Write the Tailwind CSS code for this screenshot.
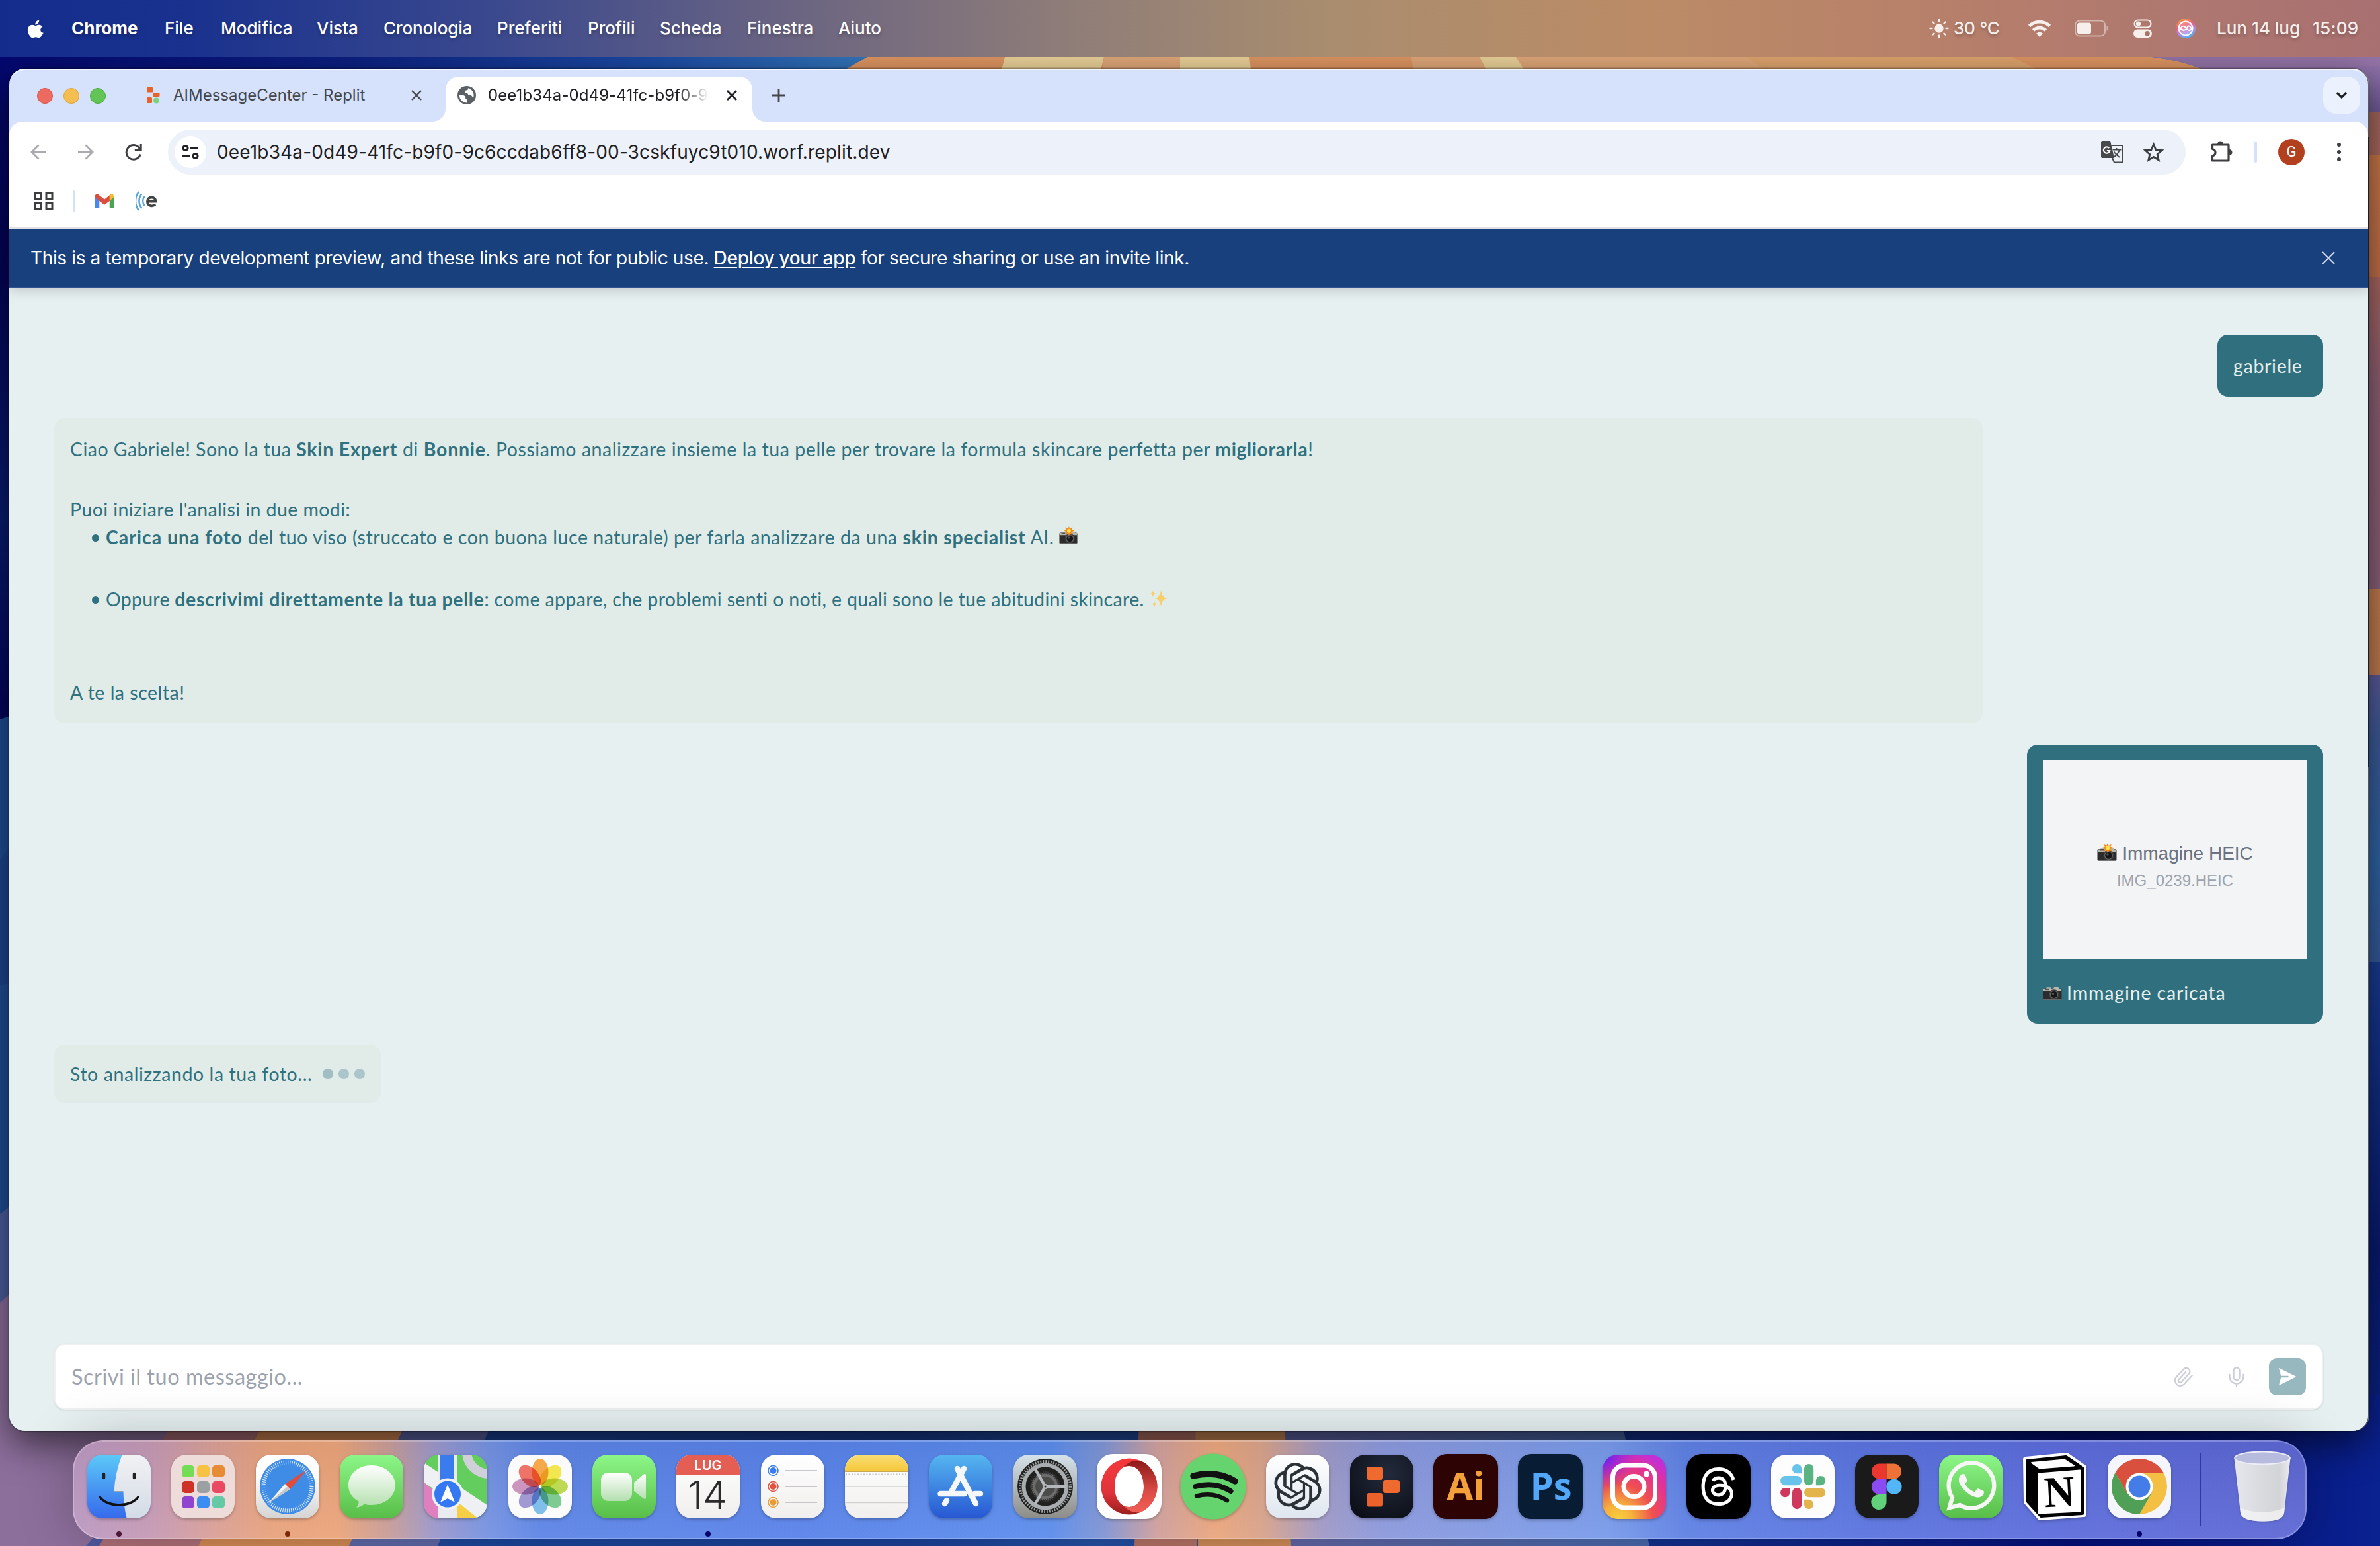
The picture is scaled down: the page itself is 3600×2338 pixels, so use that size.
<!DOCTYPE html>
<html lang="it">
<head>
<meta charset="utf-8">
<title>Skin Expert</title>
<script src="https://cdn.jsdelivr.net/npm/@tailwindcss/browser@4"></script>
</head>
<body class="bg-[#04086f]">
<!-- shared symbols and gradients -->
<svg class="absolute w-0 h-0" aria-hidden="true">
  <defs>
    <linearGradient id="green" x1="0" y1="0" x2="0" y2="1"><stop offset="0" stop-color="#8cf688"/><stop offset="1" stop-color="#58be48"/></linearGradient>
    <linearGradient id="white" x1="0" y1="0" x2="0" y2="1"><stop offset="0" stop-color="#ffffff"/><stop offset="1" stop-color="#f0efed"/></linearGradient>
    <linearGradient id="blue" x1="0" y1="0" x2="0" y2="1"><stop offset="0" stop-color="#55b6f0"/><stop offset="1" stop-color="#2757d3"/></linearGradient>
    <linearGradient id="glass" x1="0" y1="0" x2="0" y2="1"><stop offset="0" stop-color="#ffffff"/><stop offset="1" stop-color="#b4dfae"/></linearGradient>
    <symbol id="camera" viewBox="0 0 30 30">
      <rect x="0.5" y="8" width="29" height="18" rx="2" fill="#2c2c2c"/>
      <path d="M1 12V8.500h4l1-2h6l1 2h3l2-2.500h6l2 2.500h3V12z" fill="#b9b6ae"/>
      <rect x="4" y="8" width="6" height="2.500" fill="#555"/>
      <circle cx="17.500" cy="17.500" r="8" fill="#3b3b3b"/><circle cx="17.500" cy="17.500" r="6.500" fill="#666"/><circle cx="17.500" cy="17.500" r="5.200" fill="#161616"/><circle cx="16" cy="16" r="1.800" fill="#4d5660"/>
      <rect x="1" y="25" width="28" height="1" fill="#777"/>
    </symbol>
    <symbol id="flash" viewBox="0 0 30 30">
      <path d="M16 1l1.600 4 4.200-2.200-1.400 4 4 1.300-3.800 1.800 2 3.800-4-1.300L16 16l-2.100-3.800-4.200 1.200 2-3.600-3.800-1.700 4-1.400L10.200 2.800l4.200 2z" fill="#f08a1c"/><circle cx="16" cy="8.300" r="3.200" fill="#ffe14d"/>
    </symbol>
  </defs>
</svg>

<div class="relative w-[3600px] h-[2338px] overflow-hidden flex flex-col font-[Inter,'Liberation_Sans',sans-serif]">

  <!-- wallpaper -->
  <svg class="absolute inset-0" width="3600" height="2338" viewBox="0 0 3600 2338">
    <defs>
      <linearGradient id="wt" x1="0" x2="1300" gradientUnits="userSpaceOnUse"><stop offset="0" stop-color="#04086f"/><stop offset=".4" stop-color="#0b1f80"/><stop offset=".75" stop-color="#1b49a2"/><stop offset="1" stop-color="#3273b8"/></linearGradient>
      <linearGradient id="wl" x1="0" y1="86" x2="0" y2="1085" gradientUnits="userSpaceOnUse"><stop offset="0" stop-color="#04086f"/><stop offset=".3" stop-color="#030358"/><stop offset=".7" stop-color="#091c70"/><stop offset="1" stop-color="#03035c"/></linearGradient>
      <linearGradient id="wr" x1="0" y1="86" x2="0" y2="2338" gradientUnits="userSpaceOnUse"><stop offset="0" stop-color="#9475aa"/><stop offset=".037" stop-color="#6f5a98"/><stop offset=".0371" stop-color="#a3675f"/><stop offset=".066" stop-color="#a8685c"/><stop offset=".0661" stop-color="#c87748"/><stop offset=".148" stop-color="#c06f4a"/><stop offset=".1481" stop-color="#a8665f"/><stop offset=".22" stop-color="#8f6074"/><stop offset=".357" stop-color="#8b6078"/><stop offset=".3571" stop-color="#c27c4e"/><stop offset=".415" stop-color="#c07a50"/><stop offset=".4151" stop-color="#5b5a9a"/><stop offset=".46" stop-color="#3b5a9a"/><stop offset=".54" stop-color="#2e65a5"/><stop offset=".608" stop-color="#35599a"/><stop offset=".6081" stop-color="#183c92"/><stop offset=".8" stop-color="#081a70"/><stop offset="1" stop-color="#0c2a94"/></linearGradient>
      <linearGradient id="wb" x1="0" x2="3600" gradientUnits="userSpaceOnUse"><stop offset="0" stop-color="#5b5fa3"/><stop offset=".2" stop-color="#1b469c"/><stop offset=".38" stop-color="#1a4098"/><stop offset=".46" stop-color="#2450a4"/><stop offset=".7" stop-color="#13308e"/><stop offset=".87" stop-color="#04107a"/><stop offset="1" stop-color="#0a2190"/></linearGradient>
      <linearGradient id="wp" x1="0" x2="1" ><stop offset="0" stop-color="#6266a6"/><stop offset="1" stop-color="#4769ad"/></linearGradient>
    </defs>
    <rect y="0" width="3600" height="300" fill="url(#wt)"/>
    <rect y="110" width="40" height="980" fill="url(#wl)"/>
    <path d="M1312 86H3255Q3300 92 3330 104L3400 130H1236z" fill="#dc9461"/>
    <path d="M1520 86h150l-10 40h-150z M1785 86h105l4 40h-109z M2238 86h55l30 40h-65z" fill="#e8cf97"/>
    <path d="M1670 86h115v40h-120z M2135 86h103l20 40h-118z M2293 86h350l60 40h-385z" fill="#dea678"/>
    <path d="M2643 86h400l80 40h-430z" fill="#dca36c"/>
    <path d="M3255 86Q3300 92 3330 104L3400 140H3600V86z" fill="#9373a6"/>
    <rect x="3560" y="100" width="40" height="2238" fill="url(#wr)"/>
    <rect y="2110" x="0" width="3600" height="228" fill="url(#wb)"/>
    <path d="M0 1088L40 1075V1850H0z" fill="#1f4f97"/><path d="M0 1300L40 1250V1480L0 1490z" fill="#1c4690"/>
    <path d="M0 1836L40 1805V1970H0z" fill="#4d60a0"/>
    <path d="M0 1970L40 1935V2150H300L130 2338H0z" fill="#8d6f9c"/>
    <path d="M150 2338L262 2150H420L305 2338z" fill="#ae6f78"/>
    <path d="M300 2338L400 2150H615L528 2338z" fill="#d48a54"/>
    <path d="M528 2338L615 2150H745L662 2338z" fill="#5f68a8"/>
    <path d="M1723 2150h88v188h-95z" fill="#b57266"/><path d="M1808 2150h136l10 188h-142z" fill="#cf8c58"/>
    <path d="M1943 2150h510l42 188h-542z" fill="url(#wp)"/>
  </svg>

  <!-- menu bar -->
  <header class="relative flex h-[86px] shrink-0 items-center justify-between bg-[linear-gradient(90deg,#142c8c_0%,#1a328e_8%,#3b498e_21%,#6a6482_33%,#8f7d78_45%,#a98d6e_56%,#bb8b66_69%,#b7806a_81%,#ae7770_92%,#a87070_100%)] pl-[40px] text-[26px] leading-[32px] font-medium text-white [text-shadow:0_3px_5px_rgba(0,0,0,.25)]">
    <nav class="flex items-center">
      <svg class="w-[68px] h-[34px] -mt-[5px] drop-shadow" viewBox="0 0 68 34" fill="#fff"><path transform="translate(-.5,-.5) scale(1.200)" d="M21.800 21.800c-.5 1.200-1.100 2.200-1.800 3.200-1 1.400-2.200 3.200-3.900 3.200-1.500 0-1.900-1-4-1-2 0-2.500 1-4 1-1.600 0-2.800-1.600-3.800-3C1.600 21.500 1.300 17 3 14.600c1.100-1.700 3-2.700 4.700-2.700 1.800 0 2.900 1 4.300 1 1.400 0 2.300-1 4.300-1 1.600 0 3.200.9 4.400 2.300-3.900 2.100-3.200 7.600 1.100 7.600zM15.200 9.700c.8-1 1.400-2.400 1.200-3.800-1.300.1-2.800.9-3.700 2-.8.900-1.400 2.300-1.200 3.700 1.400 0 2.900-.8 3.700-1.900z"/></svg>
      <b class="w-[141px]">Chrome</b>
      <span class="w-[85px]">File</span>
      <span class="w-[145px]">Modifica</span>
      <span class="w-[101px]">Vista</span>
      <span class="w-[172px] tracking-[-.1px]">Cronologia</span>
      <span class="w-[137px]">Preferiti</span>
      <span class="w-[109px]">Profili</span>
      <span class="w-[132px]">Scheda</span>
      <span class="w-[138px]">Finestra</span>
      <span>Aiuto</span>
    </nav>
    <div class="flex items-center whitespace-nowrap text-[#f6efec]">
      <svg class="w-[30px] h-[30px] mr-[7px]" viewBox="0 0 30 30" fill="#f6efec" stroke="#f6efec" stroke-width="2.400" stroke-linecap="round"><circle cx="15" cy="15" r="5.500"/><path d="M15 1.500v3M15 25.500v3M1.500 15h3M25.500 15h3M5.500 5.500l2 2M22.500 22.500l2 2M5.500 24.500l2-2M22.500 7.500l2-2"/></svg>
      <span class="w-[112px] tracking-[-.2px]">30 °C</span>
      <svg class="w-[36px] h-[28px] mr-[35px]" viewBox="0 0 36 28" fill="none" stroke="#f6efec" stroke-width="4.600"><path d="M2.500 10.500a22 22 0 0 1 31 0"/><path d="M8.500 17a13.500 13.500 0 0 1 19 0"/><path d="M18 27l-5-5.300a7.200 7.200 0 0 1 10 0z" fill="#f6efec" stroke="none"/></svg>
      <svg class="w-[52px] h-[26px] mr-[37px]" viewBox="0 0 52 26"><rect x="1" y="1.500" width="45" height="23" rx="6.500" fill="none" stroke="#f6efec" stroke-opacity=".5" stroke-width="2"/><rect x="4" y="4.500" width="21" height="17" rx="3.500" fill="#f6efec"/><path d="M48.500 9a4.500 4.500 0 0 1 0 8z" fill="#f6efec" fill-opacity=".5"/></svg>
      <svg class="w-[28px] h-[28px] mr-[36px]" viewBox="0 0 28 28"><rect x="1.500" y="1.500" width="25" height="11" rx="5.500" fill="none" stroke="#f6efec" stroke-width="2.200"/><circle cx="7.500" cy="7" r="3.600" fill="#f6efec"/><rect y="15.500" width="28" height="12.500" rx="6.200" fill="#f6efec"/><circle cx="21" cy="21.700" r="3.800" fill="#a8776a"/></svg>
      <svg class="w-[30px] h-[30px] mr-[32px]" viewBox="0 0 30 30"><defs><linearGradient id="siri" x1=".2" y1="0" x2=".6" y2="1"><stop offset="0" stop-color="#f0a040"/><stop offset=".4" stop-color="#ea5c7c"/><stop offset=".7" stop-color="#b08ae8"/><stop offset="1" stop-color="#48b4f5"/></linearGradient></defs><circle cx="15" cy="15" r="15" fill="url(#siri)"/><circle cx="15" cy="15" r="10.500" fill="#fff" fill-opacity=".2" stroke="#fff" stroke-width="2"/><path d="M6 17c4-7 7-6 10-2s6 4 8 0M6 14c5 6 9 4 11 0s5-3 7 2" fill="none" stroke="#fff" stroke-width="2"/></svg>
      <span class="w-[145px]">Lun 14 lug</span>
      <span class="w-[102px] tracking-[.3px]">15:09</span>
    </div>
  </header>

  <!-- browser window -->
  <main class="relative mt-[18px] ml-[14px] flex h-[2060px] w-[3568px] shrink-0 flex-col rounded-[24px] bg-[#d6e1fb] shadow-[0_20px_56px_rgba(0,0,0,.6),0_0_3px_rgba(0,0,0,.8),2px_0_0_#a4a6a8] [clip-path:inset(-18px_-20px_-200px_-14px)]">
    <i class="absolute -right-[2px] top-[103px] h-[953px] w-[2px] bg-[#16202c]"></i>
    <!-- tab strip -->
    <div class="flex h-[80px] shrink-0 items-end rounded-t-[24px] border-t-2 border-[#f4f7ff] pl-[42px]">
      <div class="mb-[27px] flex gap-[16px]"><i class="size-[24px] rounded-full border border-[#d65548] bg-[#ec6a5f]"></i><i class="size-[24px] rounded-full border border-[#dda23c] bg-[#f4bf50]"></i><i class="size-[24px] rounded-full border border-[#4cab3d] bg-[#61c455]"></i></div>
      <div class="ml-[62px] flex h-[80px] w-[452px] items-center">
        <svg class="w-[20px] h-[26px] mr-[20px]" viewBox="0 0 20 26"><rect x="0" y="1" width="9.500" height="7.500" rx="1.500" fill="#e8632a"/><rect x="9" y="9" width="10.500" height="6" rx="1.500" fill="#e8632a"/><rect y="16" width="8" height="9" rx="1.500" fill="#e8632a"/><circle cx="14.500" cy="21" r="4.500" fill="#7bd37d"/></svg>
        <span class="w-[360px] text-[24px] text-[#44474b]">AIMessageCenter - Replit</span>
        <svg class="w-[16px] h-[16px]" viewBox="0 0 16 16" stroke="#44474b" stroke-width="2.400"><path d="M1 1l14 14M15 1L1 15"/></svg>
      </div>
      <div class="relative flex h-[68px] w-[464px] items-center rounded-t-[20px] bg-white pl-[18px]">
        <svg class="absolute -left-[20px] bottom-0 w-[20px] h-[20px]" viewBox="0 0 20 20"><path d="M20 0v20H0A20 20 0 0 0 20 0z" fill="#fff"/></svg>
        <svg class="absolute -right-[20px] bottom-0 w-[20px] h-[20px]" viewBox="0 0 20 20"><path d="M0 0v20h20A20 20 0 0 1 0 0z" fill="#fff"/></svg>
        <svg class="-mt-[12px] w-[28px] h-[28px] mr-[18px]" viewBox="0 0 28 28"><circle cx="14" cy="14" r="14" fill="#5b6065"/><path d="M3 13c4 0 9 1 9 4s2 2 2 4v4.500A11.500 11.500 0 0 1 3 13zM16 3c1 2-1 3.500-3 3.500S11 10 11 11h4l2 3h3c2 0 2 3 4.500 3A12 12 0 0 0 16 3z" fill="#fff"/></svg>
        <span class="-mt-[12px] mr-[27px] w-[334px] overflow-hidden whitespace-nowrap text-[24px] leading-[32px] tracking-[.1px] text-[#202124] [mask-image:linear-gradient(90deg,#000_86%,transparent)]">0ee1b34a-0d49-41fc-b9f0-9</span>
        <svg class="-mt-[12px] w-[16px] h-[16px]" viewBox="0 0 16 16" stroke="#202124" stroke-width="2.800"><path d="M1 1l14 14M15 1L1 15"/></svg>
      </div>
      <svg class="ml-[29px] mb-[29px] w-[22px] h-[22px]" viewBox="0 0 22 22" stroke="#44474b" stroke-width="2.800"><path d="M11 1v20M1 11h20"/></svg>
      <div class="mb-[12px] ml-auto mr-[12px] flex size-[56px] items-center justify-center rounded-[20px] bg-[#ebf2fd]"><svg class="w-[18px] h-[12px]" viewBox="0 0 18 12" fill="none" stroke="#1d1f22" stroke-width="3.200"><path d="M2 2l7 7 7-7"/></svg></div>
    </div>

    <!-- toolbar -->
    <div class="flex h-[160px] shrink-0 flex-col rounded-t-[20px] bg-white">
      <div class="mt-[12px] flex h-[68px] items-center">
        <svg class="ml-[32px] w-[24px] h-[24px]" viewBox="0 0 24 24" fill="none" stroke="#a9abae" stroke-width="2.800"><path d="M24 12H2M12.500 1.500L2 12l10.500 10.500"/></svg>
        <svg class="ml-[48px] w-[24px] h-[24px]" viewBox="0 0 24 24" fill="none" stroke="#a9abae" stroke-width="2.800"><path d="M0 12h22M11.500 1.500L22 12 11.500 22.500"/></svg>
        <svg class="ml-[47px] w-[26px] h-[26px]" viewBox="0 0 26 26" fill="none" stroke="#3c3e41" stroke-width="3"><path d="M23.300 16.500a10.800 10.800 0 1 1-1.500-9.300L24 10"/><path d="M24.200 1v9.500H14.800"/></svg>
        <div class="ml-[39px] flex h-[68px] w-[3052px] items-center rounded-full bg-[#edf2fa] pl-[10px]">
          <span class="flex size-[48px] items-center justify-center rounded-full bg-white"><svg class="w-[26px] h-[24px]" viewBox="0 0 26 24" fill="none" stroke="#1f2023" stroke-width="3"><circle cx="5.500" cy="6" r="3.600"/><path d="M13 6h12M1 18h12"/><circle cx="20.500" cy="18" r="3.600"/></svg></span>
          <span class="ml-[16px] text-[28px] leading-[36px] tracking-[.15px] text-[#1f2023]">0ee1b34a-0d49-41fc-b9f0-9c6ccdab6ff8-00-3cskfuyc9t010.worf.replit.dev</span>
          <svg class="ml-auto w-[34px] h-[34px] mr-[30px]" viewBox="0 0 34 34"><path d="M2 0h12l6 26H2a2 2 0 0 1-2-2V2a2 2 0 0 1 2-2z" fill="#46484b"/><path d="M15.500 7H31a2 2 0 0 1 2 2v21.500a2 2 0 0 1-2 2H20l-3-6.500" fill="none" stroke="#46484b" stroke-width="2.200"/><path d="M17.500 13.500h13M23.500 11v2.500M28 13.500c-1.500 5-5 8.500-8.500 11M19.500 16.500c2 3 5.500 6 8.500 8.500" fill="none" stroke="#46484b" stroke-width="2"/><path d="M12.200 11a4.700 4.700 0 1 0 1 4H8.800" fill="none" stroke="#fff" stroke-width="2.200"/></svg>
          <svg class="mr-[33px] w-[31px] h-[30px]" viewBox="0 0 31 30" fill="none" stroke="#3c3e41" stroke-width="2.800"><path d="M15.500 3.500l3.500 8.200 9 .8-6.800 5.900 2 8.700-7.700-4.600-7.700 4.600 2-8.700L3 12.500l9-.8z"/></svg>
        </div>
        <svg class="ml-[38px] w-[34px] h-[34px]" viewBox="0 0 34 34" fill="none" stroke="#3c3e41" stroke-width="3.200" stroke-linejoin="round"><path d="M2.500 6H27V30H2.500V23c6-1.500 6-9 0-10.500z"/><path d="M10 5a4.500 4.500 0 0 1 9 0zM28 13a4.500 4.500 0 0 1 0 9z" fill="#3c3e41" stroke="none"/></svg>
        <i class="ml-[32px] h-[32px] w-[4px] rounded-full bg-[#d3e1fb]"></i>
        <span class="ml-[32px] flex size-[40px] items-center justify-center rounded-full bg-[#b23f1e] font-[Roboto,sans-serif] text-[22px] leading-none text-white">G</span>
        <svg class="ml-[49px] w-[6px] h-[28px]" viewBox="0 0 6 28" fill="#3c3e41"><circle cx="3" cy="3" r="3"/><circle cx="3" cy="14" r="3"/><circle cx="3" cy="25" r="3"/></svg>
      </div>
      <div class="flex h-[80px] items-center">
        <svg class="ml-[37px] w-[30px] h-[28px]" viewBox="0 0 30 28" fill="none" stroke="#3c3e41" stroke-width="3"><path d="M1.500 1.500h9v9h-9zM19 1.500h9v9h-9zM1.500 17.500h9v9h-9zM19 17.500h9v9h-9z"/></svg>
        <i class="ml-[29px] h-[32px] w-[4px] rounded-full bg-[#d3e1fb]"></i>
        <svg class="ml-[30px] w-[28px] h-[22px]" viewBox="0 0 29 22"><path d="M0 3v17.500A1.500 1.500 0 0 0 1.500 22H6.500V8z" fill="#4a86f0"/><path d="M29 3v17.500a1.500 1.500 0 0 1-1.500 1.500h-5V8z" fill="#4aa553"/><path d="M0 3C0 0 3-1 5 1l9.500 7.500L24 1c1-1 3-1 4 0l-5.500 10-8 6-8-6L0 5z" fill="#dc4c3f"/><path d="M22.500 2.200C25-.5 29 0 29 3.500V5l-6.500 6z" fill="#f5bc2f"/></svg>
        <svg class="ml-[33px] w-[34px] h-[30px]" viewBox="0 0 34 30" fill="none"><path d="M5 1a22 22 0 0 0 0 28M9.500 4a17 17 0 0 0 0 22M13.500 8a12 12 0 0 0 0 14" stroke="#5aa5dd" stroke-width="2.600"/><path d="M18 15.500h12.500c0-8-12.500-8-12.500 0 0 8 9 8 12 4.500" stroke="#444" stroke-width="3.800"/></svg>
      </div>
    </div>

    <!-- page -->
    <div class="relative flex min-h-0 grow flex-col overflow-hidden rounded-b-[24px] border-t-2 border-[#dfe1e4] bg-[#e7f0f1]">
      <div class="relative flex h-[90px] shrink-0 items-center border-b-2 border-[#2f5490] bg-[#18407d] pl-[32px] pr-[50px] text-[28px] leading-[40px] text-white shadow-[0_4px_16px_rgba(0,0,0,.16)]">
        <p class="whitespace-pre tracking-[-.36px]">This is a temporary development preview, and these links are not for public use. <a class="font-medium tracking-[-.3px] underline underline-offset-4">Deploy your app</a> for secure sharing or use an invite link.</p>
        <svg class="ml-auto w-[20px] h-[20px]" viewBox="0 0 20 20" stroke="#cdd6e6" stroke-width="2"><path d="M1 1l18 18M19 1L1 19"/></svg>
      </div>

      <div class="flex grow flex-col pl-[68px] pr-[68px] font-[Lato,sans-serif] text-[28.5px] leading-[46px] tracking-[.6px] text-[#2f717f]">
        <div class="mt-[70px] flex h-[94px] w-[160px] items-center self-end rounded-[16px] bg-[#30707e] pl-[24px] tracking-[.7px] text-[#e7f0f1]">gabriele</div>

        <div class="mt-[32px] h-[462px] w-[2917px] rounded-[16px] bg-[#e1ebe7] pl-[24px] pt-[24px] [&>p]:whitespace-pre">
          <p class="tracking-[.54px]"><span class="tracking-[.45px]">Ciao Gabriele! Sono la tua </span><b class="tracking-[.75px]">Skin Expert</b> di <b class="tracking-[.75px]">Bonnie</b>. Possiamo analizzare insieme la tua pelle per trovare la formula skincare perfetta per <b>migliorarla</b>!</p>
          <p class="mt-[45px] tracking-[.42px]">Puoi iniziare l'analisi in due modi:</p>
          <p class="-mt-[4px] flex pl-[33px]"><i class="mr-[10px] mt-[19px] size-[11px] rounded-full bg-[#2f717f]"></i><b class="tracking-[.95px]">Carica una foto</b><span class="tracking-[.54px]"> del tuo viso (struccato e con buona luce naturale) per farla analizzare da una </span><b class="tracking-[.75px]">skin specialist</b><span> AI.</span><span class="relative ml-[8px] mt-[9px] size-[28px]"><svg class="absolute inset-0 size-[28px]"><use href="#camera"/></svg><svg class="absolute inset-0 -mt-[3px] size-[28px]"><use href="#flash"/></svg></span></p>
          <p class="mt-[48px] flex pl-[33px]"><i class="mr-[10px] mt-[19px] size-[11px] rounded-full bg-[#2f717f]"></i><span class="tracking-[.25px]">Oppure </span><b class="tracking-[.64px]">descrivimi direttamente la tua pelle</b><span class="tracking-[.34px]">: come appare, che problemi senti o noti, e quali sono le tue abitudini skincare.</span><svg class="ml-[8px] mt-[8px] size-[28px]" viewBox="0 0 28 28" fill="#f7cf6b"><path d="M17 2q1.500 10.500 9 12-7.500 1.500-9 12-1.500-10.500-9-12 7.500-1.500 9-12zM5 2q.6 4 4 5-3.400.8-4 5-.6-4.200-4-5 3.400-1 4-5zM7 18q.6 4 3.500 4.500Q7.600 23.500 7 27.500q-.6-4-3.500-5Q6.400 22 7 18z"/></svg></p>
          <p class="mt-[95px] tracking-[.5px]">A te la scelta!</p>
        </div>

        <div class="mt-[32px] flex h-[422px] w-[448px] flex-col self-end rounded-[16px] bg-[#30707e] px-[24px] pt-[24px]">
          <div class="flex h-[300px] flex-col items-center justify-center bg-[#f3f4f6] pt-[24px] font-['Liberation_Sans',sans-serif] tracking-normal">
            <div class="flex items-center text-[28px] leading-[40px] text-[#6b7280]"><span class="relative mr-[8px] size-[30px]"><svg class="absolute inset-0 size-[30px]"><use href="#camera"/></svg><svg class="absolute inset-0 size-[30px] -mt-[2px]"><use href="#flash"/></svg></span>Immagine HEIC</div>
            <div class="text-[24px] leading-[42px] text-[#9ca3af]">IMG_0239.HEIC</div>
          </div>
          <div class="mt-[28px] flex items-center tracking-[.87px] text-[#e7f0f1]"><svg class="mr-[7px] size-[29px]"><use href="#camera"/></svg>Immagine caricata</div>
        </div>

        <div class="mt-[32px] flex h-[88px] w-[494px] items-center rounded-[16px] bg-[#e1ebe7] pl-[24px]">
          <span class="w-[382px] tracking-[.57px]">Sto analizzando la tua foto...</span>
          <span class="flex gap-[8px]"><i class="size-[16px] rounded-full bg-[#a1bfc3]"></i><i class="size-[16px] rounded-full bg-[#abc6ca]"></i><i class="size-[16px] rounded-full bg-[#abc6ca]"></i></span>
        </div>

        <div class="mt-auto mb-[32px] flex h-[100px] items-center rounded-[16px] border-2 border-[#eef0f1] bg-white pl-[24px] pr-[24px] text-[32.5px] tracking-[.5px] text-[#9ca3af] shadow-sm">
          <span>Scrivi il tuo messaggio...</span>
          <svg class="ml-auto w-[30px] h-[31px]" viewBox="0 0 30 31" fill="none" stroke="#ccced8" stroke-width="2.300" stroke-linecap="round"><path d="M28.500 13.500L16.500 26.500a8 8 0 0 1-12-10.500L16 3.500a5.200 5.200 0 0 1 8 7L12.500 23a2.700 2.700 0 0 1-4-3.600L19 8"/></svg>
          <svg class="ml-[54px] w-[24px] h-[31px]" viewBox="0 0 24 31" fill="none" stroke="#ccced8" stroke-width="2.400" stroke-linecap="round"><rect x="7.500" y="1.200" width="9" height="19" rx="4.500"/><path d="M1.500 12v3a10.500 10.500 0 0 0 21 0v-3M12 26v4"/></svg>
          <span class="ml-[37px] flex size-[56px] items-center justify-center rounded-[12px] bg-[#97b8bf]"><svg class="w-[28px] h-[28px]" viewBox="0 0 28 28" fill="#fff"><path d="M1 .8L27.500 14 1 27.200l3.200-11.900H15.500v-2.600H4.200z"/></svg></span>
        </div>
      </div>
    </div>
  </main>

  <!-- dock -->
  <footer class="relative mt-[14px] ml-[110px] h-[150px] w-[3379px] shrink-0 rounded-[46px] shadow-[0_0_80px_rgba(0,0,0,.25),inset_0_0_0_2px_rgba(255,255,255,.25)] bg-[linear-gradient(180deg,rgba(0,0,0,.05),rgba(255,255,255,.06)),linear-gradient(90deg,#bb98c2_0px,#c599b4_120px,#d99f98_210px,#e8a27c_300px,#eba47a_400px,#c79c98_480px,#9a97cc_550px,#7492e2_630px,#5c84e6_710px,#5882ea_1100px,#5a8cec_1480px,#7f94d4_1560px,#cf9f9c_1640px,#eaa57c_1730px,#d8a28a_1800px,#9f99c6_1890px,#8b98dc_1980px,#7f9ae6_2200px,#789aea_2320px,#5e80e4_2440px,#5a74e0_2700px,#5c6cdc_3000px,#5d67d4_3379px)]">
    <div class="flex h-[98px] w-[3154px] justify-between ml-[21px] mt-[21px] [&>div]:relative [&>div]:size-[98px] [&>div]:shrink-0 [&_svg]:size-[98px] [&_svg]:overflow-visible [&_svg]:drop-shadow-[0_2px_2px_rgba(0,0,0,.25)] [&_i]:absolute [&_i]:left-[45px] [&_i]:top-[117px] [&_i]:size-[8px] [&_i]:rounded-full">
      <!-- Finder -->
      <div><svg viewBox="0 0 98 98"><defs><clipPath id="sq"><rect x="1" y="1" width="96" height="96" rx="23"/></clipPath><linearGradient id="fb" x1="0" y1="0" x2="0" y2="1"><stop offset="0" stop-color="#5ccaf8"/><stop offset="1" stop-color="#3568ec"/></linearGradient><linearGradient id="fw" x1="0" y1="0" x2="0" y2="1"><stop offset="0" stop-color="#f2f2f4"/><stop offset="1" stop-color="#d2dbe6"/></linearGradient></defs><g clip-path="url(#sq)"><rect width="98" height="98" fill="url(#fb)"/><path d="M54 0Q43 28 41.500 57H55.500Q56 80 61 98H98V0z" fill="url(#fw)"/><path d="M41.500 57H55.500" stroke="#7c8aa0" stroke-width="1.500"/></g><path d="M26 30v6M72 30v6" stroke="#222" stroke-width="4.500" stroke-linecap="round"/><path d="M20 65C32 81 66 81 78 65" fill="none" stroke="#111" stroke-width="3.500" stroke-linecap="round"/></svg><i class="bg-[#4a1838]"></i></div>
      <!-- Launchpad -->
      <div><svg viewBox="0 0 98 98"><rect x="1" y="1" width="96" height="96" rx="23" fill="#eedcda"/><g><rect x="17" y="17" width="19" height="18" rx="5" fill="#74dc55"/><rect x="40" y="17" width="19" height="18" rx="5" fill="#f5c243"/><rect x="63" y="17" width="19" height="18" rx="5" fill="#e78c35"/><rect x="17" y="41" width="19" height="18" rx="5" fill="#cf3327"/><rect x="40" y="41" width="19" height="18" rx="5" fill="#9ba0a3"/><rect x="63" y="41" width="19" height="18" rx="5" fill="#ea4a61"/><rect x="17" y="64" width="19" height="18" rx="5" fill="#9044cf"/><rect x="40" y="64" width="19" height="18" rx="5" fill="#3c8df2"/><rect x="63" y="64" width="19" height="18" rx="5" fill="#66c9a6"/></g></svg></div>
      <!-- Safari -->
      <div><svg viewBox="0 0 98 98"><defs><linearGradient id="sw" x1="0" y1="0" x2="0" y2="1"><stop offset=".3" stop-color="#fff"/><stop offset="1" stop-color="#d4d4d4"/></linearGradient></defs><rect x="1" y="1" width="96" height="96" rx="23" fill="url(#sw)"/><circle cx="49" cy="49" r="42" fill="#3f8ce6"/><circle cx="49" cy="49" r="36.500" fill="none" stroke="#fff" stroke-opacity=".8" stroke-width="6" stroke-dasharray="1.100 2.084"/><path d="M78 24L53 53 45 45z" fill="#e14b3c"/><path d="M20 74L45 45l8 8z" fill="#f4f4f4"/><path d="M20 74L53 53l-4-4z" fill="#c9c9c9"/></svg><i class="bg-[#7a2a08]"></i></div>
      <!-- Messages -->
      <div><svg viewBox="0 0 98 98"><rect x="1" y="1" width="96" height="96" rx="23" fill="url(#green)"/><path d="M49 17C69 17 85 30 85 47S69 77 49 77c-4 0-8-.5-11-1.500-3 3-7 5-12 5 3-3 4-6 3.500-9C19 66 14 57 14 47c0-17 15-30 35-30z" fill="url(#glass)"/></svg></div>
      <!-- Maps -->
      <div><svg viewBox="0 0 98 98"><g clip-path="url(#sq)"><rect width="98" height="98" fill="#63cd5e"/><path d="M0 42L22 60V98H0z" fill="#df7fc0"/><path d="M0 12L98 78V98H84L0 42z" fill="#eef0f4"/><path d="M52 98V72L84 98z" fill="#f6cf45"/><path d="M22 0H51V98H22z" fill="#e9ebef"/><path d="M26 0H47V44H26z" fill="#3a7bee"/><path d="M66 -4A34 34 0 0 0 100 30" fill="none" stroke="#cfd0d8" stroke-width="14"/></g><circle cx="37" cy="60.500" r="24" fill="#eef1f6"/><circle cx="37" cy="60.500" r="20" fill="#3478f2"/><path d="M37 46L48 73 37 67 26 73z" fill="#fff"/></svg></div>
      <!-- Photos -->
      <div><svg viewBox="0 0 98 98"><rect x="1" y="1" width="96" height="96" rx="23" fill="#fbfbfb"/><g class="[&>ellipse]:mix-blend-multiply" opacity=".92"><ellipse cx="49" cy="27" rx="12.500" ry="20" fill="#f5a33c"/><ellipse cx="49" cy="27" rx="12.500" ry="20" fill="#f2e640" transform="rotate(45 49 49)"/><ellipse cx="49" cy="27" rx="12.500" ry="20" fill="#b9d845" transform="rotate(90 49 49)"/><ellipse cx="49" cy="27" rx="12.500" ry="20" fill="#74c68a" transform="rotate(135 49 49)"/><ellipse cx="49" cy="27" rx="12.500" ry="20" fill="#76b9ea" transform="rotate(180 49 49)"/><ellipse cx="49" cy="27" rx="12.500" ry="20" fill="#9a92cf" transform="rotate(225 49 49)"/><ellipse cx="49" cy="27" rx="12.500" ry="20" fill="#c98dba" transform="rotate(270 49 49)"/><ellipse cx="49" cy="27" rx="12.500" ry="20" fill="#f0685c" transform="rotate(315 49 49)"/></g></svg></div>
      <!-- FaceTime -->
      <div><svg viewBox="0 0 98 98"><rect x="1" y="1" width="96" height="96" rx="23" fill="url(#green)"/><rect x="14" y="28" width="47" height="43" rx="11" fill="url(#glass)"/><path d="M64 43L78 31q4-3 4 2V65q0 5-4 2L64 56z" fill="url(#glass)"/></svg></div>
      <!-- Calendar -->
      <div><svg viewBox="0 0 98 98"><g clip-path="url(#sq)"><rect width="98" height="98" fill="url(#white)"/><rect width="98" height="31" fill="#e45e54"/></g><text x="49" y="24" text-anchor="middle" class="text-[20px] font-semibold" fill="#fff">LUG</text><text x="48" y="83" text-anchor="middle" textLength="60" class="text-[59px] font-light" fill="#2b2b2b">14</text></svg><i class="bg-[#04046c]"></i></div>
      <!-- Reminders -->
      <div><svg viewBox="0 0 98 98"><rect x="1" y="1" width="96" height="96" rx="23" fill="url(#white)"/><g fill="none" stroke-width="1.600"><circle cx="19.500" cy="25" r="7.500" stroke="#3b7df0"/><circle cx="19.500" cy="49" r="7.500" stroke="#e5503f"/><circle cx="19.500" cy="73" r="7.500" stroke="#ec9a35"/><path d="M37 25H86M37 49H86M37 73H86" stroke="#b9b9bd"/></g><circle cx="19.500" cy="25" r="5" fill="#3b7df0"/><circle cx="19.500" cy="49" r="5" fill="#e5503f"/><circle cx="19.500" cy="73" r="5" fill="#ec9a35"/></svg></div>
      <!-- Notes -->
      <div><svg viewBox="0 0 98 98"><defs><linearGradient id="ny" x1="0" y1="0" x2="0" y2="1"><stop offset="0" stop-color="#f8de78"/><stop offset="1" stop-color="#f6c83a"/></linearGradient></defs><g clip-path="url(#sq)"><rect width="98" height="98" fill="url(#white)"/><rect width="98" height="26" fill="url(#ny)"/><path d="M0 26.500H98" stroke="#c9a853"/><path d="M2 30.500H98" stroke="#c4c4c4" stroke-width="2" stroke-dasharray="2 2.500"/><path d="M0 49H98M0 73.500H98" stroke="#d2d2d2" stroke-width="1.500"/></g></svg></div>
      <!-- App Store -->
      <div><svg viewBox="0 0 98 98"><rect x="1" y="1" width="96" height="96" rx="23" fill="url(#blue)"/><g stroke="#f4f8fd" stroke-width="8.500" stroke-linecap="round"><path d="M54 22L35 57M44 22L72 75M18.500 60H55M70 60H79M28 70l-3 5"/></g></svg></div>
      <!-- Settings -->
      <div><svg viewBox="0 0 98 98"><defs><linearGradient id="sg" x1="0" y1="0" x2="0" y2="1"><stop offset="0" stop-color="#d6e2ea"/><stop offset="1" stop-color="#8d8c88"/></linearGradient></defs><rect x="1" y="1" width="96" height="96" rx="23" fill="url(#sg)"/><circle cx="49" cy="49" r="42" fill="#20211f"/><circle cx="49" cy="49" r="38" fill="none" stroke="#9fa3a5" stroke-width="4" stroke-dasharray="1.800 2.180"/><circle cx="49" cy="49" r="32.500" fill="none" stroke="#a8acae" stroke-width="6"/><circle cx="49" cy="49" r="21" fill="#6b6c6b" stroke="#3c3c3c" stroke-width="4" stroke-dasharray="2 1.500"/><circle cx="49" cy="49" r="15" fill="#4b4b4a"/><path d="M49 49H80M49 49L33.500 22M49 49L33.500 76" stroke="#b4b8ba" stroke-width="4.500"/><circle cx="49" cy="49" r="4" fill="#b4b8ba"/><circle cx="49" cy="49" r="1.500" fill="#222"/></svg></div>
      <!-- Opera -->
      <div><svg viewBox="0 0 98 98"><defs><linearGradient id="o1" x1="0" y1="0" x2="0" y2="1"><stop offset="0" stop-color="#f5383c"/><stop offset=".6" stop-color="#e0343a"/><stop offset="1" stop-color="#9b1d1c"/></linearGradient><linearGradient id="o2" x1="0" y1="0" x2="0" y2="1"><stop offset="0" stop-color="#8c1a17"/><stop offset=".6" stop-color="#dc4b46"/><stop offset="1" stop-color="#ef6157"/></linearGradient></defs><rect x="0" y="0" width="98" height="98" rx="24" fill="#fff"/><path fill-rule="evenodd" d="M49 6.500a42.500 42.500 0 1 1 0 85 42.500 42.500 0 0 1 0-85zM49 18c-13 0-22 13-22 31s9 31 22 31 22-13 22-31-9-31-22-31z" fill="url(#o1)"/><path d="M40 20C54 6 68 8 77 17a42.500 42.500 0 0 1 0 64C66 92 52 90 40 78c4 2 6 2 9 2 13 0 22-13 22-31S62 18 49 18c-3 0-6 0-9 2z" fill="url(#o2)"/></svg></div>
      <!-- Spotify -->
      <div><svg viewBox="0 0 98 98"><circle cx="49" cy="49" r="49.500" fill="#65d36e"/><g fill="none" stroke="#111" stroke-linecap="round"><path d="M19 33Q54 24 82 41" stroke-width="9.500"/><path d="M22 49Q52 41 75.500 56" stroke-width="8"/><path d="M24 63.500Q49 57 70 70" stroke-width="6.500"/></g></svg></div>
      <!-- ChatGPT -->
      <div><svg viewBox="0 0 98 98"><defs><linearGradient id="gp" x1="0" y1="0" x2="0" y2="1"><stop offset="0" stop-color="#fff"/><stop offset="1" stop-color="#dfe6ef"/></linearGradient></defs><rect x="1" y="1" width="96" height="96" rx="23" fill="url(#gp)"/><path transform="translate(13 13) scale(3)" fill="#2a3238" d="M22.2819 9.8211a5.9847 5.9847 0 0 0-.5157-4.9108 6.0462 6.0462 0 0 0-6.5098-2.9A6.0651 6.0651 0 0 0 4.9807 4.1818a5.9847 5.9847 0 0 0-3.9977 2.9 6.0462 6.0462 0 0 0 .7427 7.0966 5.98 5.98 0 0 0 .511 4.9107 6.051 6.051 0 0 0 6.5146 2.9001A5.9847 5.9847 0 0 0 13.2599 24a6.0557 6.0557 0 0 0 5.7718-4.2058 5.9894 5.9894 0 0 0 3.9977-2.9001 6.0557 6.0557 0 0 0-.7475-7.0729zm-9.022 12.6081a4.4755 4.4755 0 0 1-2.8764-1.0408l.1419-.0804 4.7783-2.7582a.7948.7948 0 0 0 .3927-.6813v-6.7369l2.02 1.1686a.071.071 0 0 1 .038.052v5.5826a4.504 4.504 0 0 1-4.4945 4.4944zm-9.6607-4.1254a4.4708 4.4708 0 0 1-.5346-3.0137l.142.0852 4.783 2.7582a.7712.7712 0 0 0 .7806 0l5.8428-3.3685v2.3324a.0804.0804 0 0 1-.0332.0615L9.74 19.9502a4.4992 4.4992 0 0 1-6.1408-1.6464zM2.3408 7.8956a4.485 4.485 0 0 1 2.3655-1.9728V11.6a.7664.7664 0 0 0 .3879.6765l5.8144 3.3543-2.0201 1.1685a.0757.0757 0 0 1-.071 0l-4.8303-2.7865A4.504 4.504 0 0 1 2.3408 7.872zm16.5963 3.8558L13.1038 8.364 15.1192 7.2a.0757.0757 0 0 1 .071 0l4.8303 2.7913a4.4944 4.4944 0 0 1-.6765 8.1042v-5.6772a.79.79 0 0 0-.407-.667zm2.0107-3.0231l-.142-.0852-4.7735-2.7818a.7759.7759 0 0 0-.7854 0L9.409 9.2297V6.8974a.0662.0662 0 0 1 .0284-.0615l4.8303-2.7866a4.4992 4.4992 0 0 1 6.6802 4.66zM8.3065 12.863l-2.02-1.1638a.0804.0804 0 0 1-.038-.0567V6.0742a4.4992 4.4992 0 0 1 7.3757-3.4537l-.142.0805L8.704 5.459a.7948.7948 0 0 0-.3927.6813zm1.0976-2.3654l2.602-1.4998 2.6069 1.4998v2.9994l-2.5974 1.4997-2.6067-1.4997Z"/></svg></div>
      <!-- Replit -->
      <div><svg viewBox="0 0 98 98"><defs><radialGradient id="rp" cx=".6" cy=".3" r=".8"><stop offset="0" stop-color="#222a3c"/><stop offset="1" stop-color="#0c0f17"/></radialGradient></defs><rect x="1" y="1" width="96" height="96" rx="23" fill="url(#rp)"/><rect x="26" y="19" width="25" height="20" rx="4" fill="#ee6a2e"/><rect x="51" y="39" width="25" height="20" rx="4" fill="#ee6a2e"/><rect x="26" y="59" width="25" height="20.500" rx="4" fill="#ec622a"/></svg></div>
      <!-- Illustrator -->
      <div><svg viewBox="0 0 98 98"><rect x="0" y="0" width="98" height="98" rx="20" fill="#2d0403"/><text x="49" y="69" text-anchor="middle" textLength="57" class="font-['Open_Sans','Noto_Sans',sans-serif] text-[58px] font-bold" lengthAdjust="spacingAndGlyphs" fill="#f3a03a">Ai</text></svg></div>
      <!-- Photoshop -->
      <div><svg viewBox="0 0 98 98"><rect x="0" y="0" width="98" height="98" rx="20" fill="#081d33"/><text x="50" y="69" text-anchor="middle" textLength="63" class="font-['Open_Sans','Noto_Sans',sans-serif] text-[58px] font-bold" lengthAdjust="spacingAndGlyphs" fill="#52a7f9">Ps</text></svg></div>
      <!-- Instagram -->
      <div><svg viewBox="0 0 98 98"><defs><radialGradient id="ig" cx=".25" cy="1" r="1.100"><stop offset="0" stop-color="#f8d13c"/><stop offset=".2" stop-color="#f6b23c"/><stop offset=".5" stop-color="#ef4f50"/><stop offset=".8" stop-color="#e2309a"/><stop offset="1" stop-color="#c22fd6"/></radialGradient><radialGradient id="ig2" cx="0" cy="0" r=".55"><stop offset="0" stop-color="#4a22fa"/><stop offset="1" stop-color="#a020f0" stop-opacity="0"/></radialGradient></defs><rect x="1" y="1" width="96" height="97" rx="23" fill="url(#ig)"/><rect x="1" y="1" width="96" height="97" rx="23" fill="url(#ig2)"/><g fill="none" stroke="#fff" stroke-width="7"><rect x="16.500" y="17" width="64" height="64" rx="18"/><circle cx="48.500" cy="49" r="15.500"/></g><circle cx="67.500" cy="30" r="4.500" fill="#fff"/></svg></div>
      <!-- Threads -->
      <div><svg viewBox="0 0 98 98"><rect x="1" y="0" width="97" height="98" rx="23" fill="#000"/><path transform="translate(20 20) scale(2.420)" fill="#fff" d="M12.186 24h-.007c-3.581-.024-6.334-1.205-8.184-3.509C2.350 18.440 1.500 15.586 1.472 12.010v-.017c.03-3.579.879-6.430 2.525-8.482C5.845 1.205 8.600.024 12.180 0h.014c2.746.020 5.043.725 6.826 2.098 1.677 1.290 2.858 3.130 3.509 5.467l-2.040.569c-1.104-3.960-3.898-5.984-8.304-6.015-2.910.022-5.110.936-6.540 2.717C4.307 6.504 3.616 8.914 3.589 12c.027 3.086.718 5.496 2.057 7.164 1.430 1.783 3.631 2.698 6.540 2.717 2.623-.020 4.358-.631 5.800-2.045 1.647-1.613 1.618-3.593 1.090-4.798-.310-.710-.873-1.300-1.634-1.750-.192 1.352-.622 2.446-1.284 3.272-.886 1.102-2.140 1.704-3.730 1.790-1.202.065-2.361-.218-3.259-.801-1.063-.689-1.685-1.740-1.752-2.964-.065-1.190.408-2.285 1.330-3.082.880-.760 2.119-1.207 3.583-1.291a13.853 13.853 0 0 1 3.020.142c-.126-.742-.375-1.332-.750-1.757-.513-.586-1.308-.883-2.359-.890h-.029c-.844 0-1.992.232-2.721 1.320L7.734 7.847c.980-1.454 2.568-2.256 4.478-2.256h.044c3.194.020 5.097 1.975 5.287 5.388.108.046.216.094.321.142 1.490.700 2.580 1.761 3.154 3.070.797 1.820.871 4.790-1.548 7.158-1.850 1.810-4.094 2.628-7.277 2.650Zm1.003-11.690c-.242 0-.487.007-.739.021-1.836.103-2.980.946-2.916 2.143.067 1.256 1.452 1.839 2.784 1.767 1.224-.065 2.818-.543 3.086-3.710a10.500 10.500 0 0 0-2.215-.221z"/></svg></div>
      <!-- Slack -->
      <div><svg viewBox="0 0 98 98"><rect x="1" y="1" width="96" height="96" rx="23" fill="#fdfdfd"/><g transform="translate(15 15) scale(2.840)"><path fill="#cf375d" d="M5.042 15.165a2.528 2.528 0 0 1-2.520 2.523A2.528 2.528 0 0 1 0 15.165a2.527 2.527 0 0 1 2.522-2.520h2.520v2.520zM6.313 15.165a2.527 2.527 0 0 1 2.521-2.520 2.527 2.527 0 0 1 2.521 2.520v6.313A2.528 2.528 0 0 1 8.834 24a2.528 2.528 0 0 1-2.521-2.522v-6.313z"/><path fill="#67c3ea" d="M8.834 5.042a2.528 2.528 0 0 1-2.521-2.520A2.528 2.528 0 0 1 8.834 0a2.528 2.528 0 0 1 2.521 2.522v2.520H8.834zM8.834 6.313a2.528 2.528 0 0 1 2.521 2.521 2.528 2.528 0 0 1-2.521 2.521H2.522A2.528 2.528 0 0 1 0 8.834a2.528 2.528 0 0 1 2.522-2.521h6.312z"/><path fill="#5ab383" d="M18.956 8.834a2.528 2.528 0 0 1 2.522-2.521A2.528 2.528 0 0 1 24 8.834a2.528 2.528 0 0 1-2.522 2.521h-2.522V8.834zM17.688 8.834a2.528 2.528 0 0 1-2.523 2.521 2.527 2.527 0 0 1-2.520-2.521V2.522A2.527 2.527 0 0 1 15.165 0a2.528 2.528 0 0 1 2.523 2.522v6.312z"/><path fill="#e3b44c" d="M15.165 18.956a2.528 2.528 0 0 1 2.523 2.522A2.528 2.528 0 0 1 15.165 24a2.527 2.527 0 0 1-2.520-2.522v-2.522h2.520zM15.165 17.688a2.527 2.527 0 0 1-2.520-2.523 2.526 2.526 0 0 1 2.520-2.520h6.313A2.527 2.527 0 0 1 24 15.165a2.528 2.528 0 0 1-2.522 2.523h-6.313z"/></g></svg></div>
      <!-- Figma -->
      <div><svg viewBox="0 0 98 98"><rect x="1" y="1" width="96" height="96" rx="23" fill="#1b1a1a"/><path d="M48.500 14.500H37.500a11.600 11.600 0 0 0 0 23.200h11z" fill="#ec3630"/><path d="M48.500 14.500h11a11.600 11.600 0 0 1 0 23.200h-11z" fill="#ee7237"/><path d="M48.500 37.700H37.500a11.600 11.600 0 0 0 0 23.200h11z" fill="#8a4bf3"/><circle cx="60" cy="49.300" r="11.600" fill="#52b6f9"/><path d="M48.500 60.900H37.500a11.600 11.600 0 1 0 11 11.600z" fill="#61d27a"/></svg></div>
      <!-- WhatsApp -->
      <div><svg viewBox="0 0 98 98"><rect x="1" y="1" width="96" height="96" rx="23" fill="url(#green)"/><path transform="translate(12 10) scale(3.150)" fill="#f6f6f4" d="M17.472 14.382c-.297-.149-1.758-.867-2.030-.967-.273-.099-.471-.148-.670.150-.197.297-.767.966-.940 1.164-.173.199-.347.223-.644.075-.297-.150-1.255-.463-2.390-1.475-.883-.788-1.480-1.761-1.653-2.059-.173-.297-.018-.458.130-.606.134-.133.298-.347.446-.520.149-.174.198-.298.298-.497.099-.198.050-.371-.025-.520-.075-.149-.669-1.612-.916-2.207-.242-.579-.487-.500-.669-.510-.173-.008-.371-.010-.570-.010-.198 0-.520.074-.792.372-.272.297-1.040 1.016-1.040 2.479 0 1.462 1.065 2.875 1.213 3.074.149.198 2.096 3.200 5.077 4.487.709.306 1.262.489 1.694.625.712.227 1.360.195 1.871.118.571-.085 1.758-.719 2.006-1.413.248-.694.248-1.289.173-1.413-.074-.124-.272-.198-.570-.347m-5.421 7.403h-.004a9.870 9.870 0 0 1-5.031-1.378l-.361-.214-3.741.982.998-3.648-.235-.374a9.860 9.860 0 0 1-1.510-5.260c.001-5.450 4.436-9.884 9.888-9.884 2.640 0 5.122 1.030 6.988 2.898a9.825 9.825 0 0 1 2.893 6.994c-.003 5.450-4.437 9.884-9.885 9.884m8.413-18.297A11.815 11.815 0 0 0 12.050 0C5.495 0 .160 5.335.157 11.892c0 2.096.547 4.142 1.588 5.945L.057 24l6.305-1.654a11.882 11.882 0 0 0 5.683 1.448h.005c6.554 0 11.890-5.335 11.893-11.893a11.821 11.821 0 0 0-3.480-8.413Z"/></svg></div>
      <!-- Notion -->
      <div><svg viewBox="0 0 98 98"><path d="M4 8L66 2 92 20V91L26 96 5 72z" fill="#fff" stroke="#fff" stroke-width="8" stroke-linejoin="round"/><path d="M6 10L65 4 90 21V90L27 94 7 72z" fill="#000" stroke="#000" stroke-width="4" stroke-linejoin="round"/><path d="M13 13L63 8.500 77 17.500 25 21.500z" fill="#fff" stroke="#fff" stroke-width="2" stroke-linejoin="round"/><path d="M24 30L86 25V86L24 89z" fill="#fff" stroke="#fff" stroke-width="3" stroke-linejoin="round"/><text x="55" y="79" text-anchor="middle" textLength="46" lengthAdjust="spacingAndGlyphs" class="font-['Liberation_Serif',serif] text-[66px] font-bold" fill="#000" transform="rotate(-3 55 57)">N</text></svg></div>
      <!-- Chrome -->
      <div><svg viewBox="0 0 98 98"><rect x="1" y="1" width="96" height="96" rx="23" fill="#f4f6fc"/><circle cx="49" cy="49" r="42" fill="#f4c044"/><path d="M12.600 28L30.800 59.500 49 70 67.200 59.500 49 91A42 42 0 0 1 12.600 28z" fill="#509f56"/><path d="M12.600 28A42 42 0 0 1 85.400 28H49L30.800 59.500z" fill="#d9503f"/><circle cx="49" cy="49" r="20.500" fill="#fff"/><circle cx="49" cy="49" r="16.500" fill="#457de8"/></svg><i class="bg-[#04046c]"></i></div>
    </div>
    <i class="absolute left-[3218px] top-[20px] h-[110px] w-[2px] bg-[#2b3aa4]"></i>
    <!-- bin -->
    <svg class="absolute left-[3269px] top-[16px] drop-shadow" width="86" height="108" viewBox="0 0 86 108"><defs><linearGradient id="tr" x1="0" x2="1" y1="0" y2="0"><stop offset="0" stop-color="#e6e7ec"/><stop offset=".5" stop-color="#d9dade"/><stop offset=".8" stop-color="#d3d4d8"/><stop offset="1" stop-color="#ececf0"/></linearGradient></defs><path d="M.5 11L10 94q2 12 33 12.500T76 94L85.500 11z" fill="url(#tr)"/><path d="M10 94q2 12 33 12.500T76 94l1-8Q43 100 9 86z" fill="#f7f7f7" fill-opacity=".7"/><ellipse cx="43" cy="11" rx="42" ry="9.500" fill="#b7bbdd" stroke="#eceef6" stroke-width="1.800"/></svg>
  </footer>
</div>
</body>
</html>
